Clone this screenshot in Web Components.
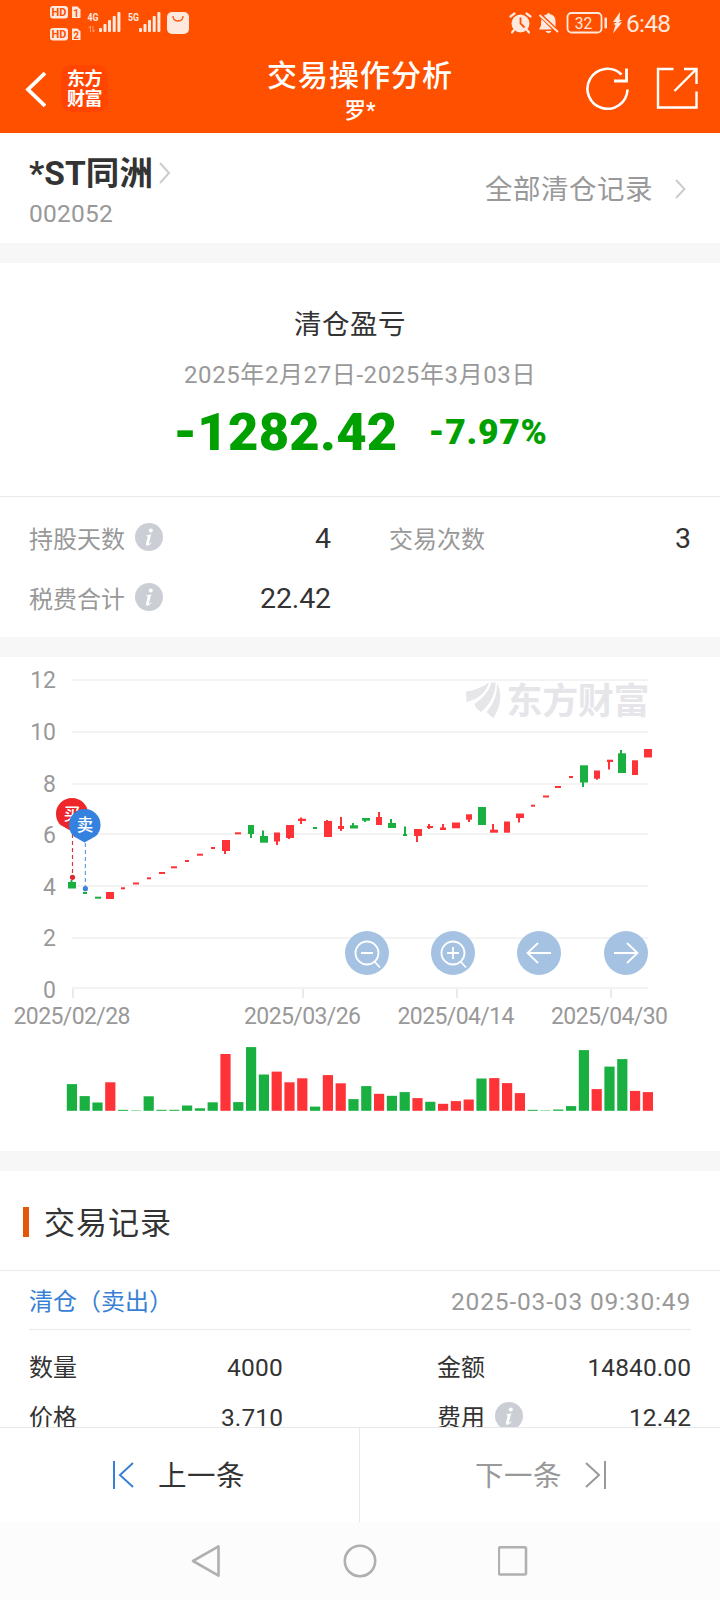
<!DOCTYPE html>
<html lang="zh-CN">
<head>
<meta charset="utf-8">
<title>交易操作分析</title>
<style>
html,body{margin:0;padding:0;background:#fff}
body{width:720px;height:1600px;overflow:hidden;font-family:Roboto,"Noto Sans CJK SC",sans-serif;color:#333}
</style>
</head>
<body>
<trade-app></trade-app>
<script>
const define=(name,html,setup)=>customElements.define(name,class extends HTMLElement{
  connectedCallback(){
    if(this.shadowRoot)return;
    const root=this.attachShadow({mode:'open'});
    const t=document.createElement('template');
    t.innerHTML=typeof html==='function'?html(this):html;
    root.append(t.content.cloneNode(true));
    if(setup)setup(this,root);
  }
});

/* One line of text; "w" spreads the letters over a given advance width. */
define('fit-text',`<style>:host{display:inline-block;line-height:1;white-space:nowrap;flex:none}</style><span><slot></slot></span>`,(el,root)=>{
  const w=+el.getAttribute('w');
  el.style.fontSize=el.getAttribute('size')+'px';
  if(w){
    const s=root.querySelector('span'),n=[...el.textContent].length;
    s.style.letterSpacing=((w-s.getBoundingClientRect().width)/n)+'px';
  }
});

define('info-dot',`<style>:host{display:block;width:28px;height:28px;flex:none}svg{display:block}</style>
<svg width="28" height="28"><circle cx="14" cy="14" r="14" fill="#cbcfd5"/><circle cx="15.8" cy="7.6" r="2" fill="#fff"/><path d="M11.2 12.4L16.3 11.3L13.9 20Q13.6 21.6 16.4 19.3L16.7 19.8Q14.2 23 12 22.8Q10.4 22.5 11 20.2L12.7 14.1Q12.9 13 11.1 13Z" fill="#fff"/></svg>`);

define('section-gap',`<style>:host{display:block;height:20px;background:#f7f7f7}</style>`);

define('status-bar',`<style>:host{display:flex;justify-content:space-between;height:44px;padding:0 48px;box-sizing:border-box}svg{display:block}</style>
<svg width="144" height="44" fill="#ffe9df">
 <rect x="2" y="6" width="18" height="12.5" rx="3"/><path d="M24 6.500h5.500l3 3v8.500h-8.500z"/>
 <rect x="2" y="28" width="18" height="12.500" rx="3"/><path d="M24 28.500h5.500l3 3v8.500h-8.500z"/>
 <g fill="#ff5000" font-weight="700" text-anchor="middle"><text x="11" y="16.200" font-size="11">HD</text><text x="28" y="16.500" font-size="10">1</text><text x="11" y="38.200" font-size="11">HD</text><text x="28" y="38.500" font-size="10">2</text></g>
 <g font-size="11.500" font-weight="700"><text x="39.500" y="20.500" textLength="11" lengthAdjust="spacingAndGlyphs">4G</text><text x="80" y="20.500" textLength="11" lengthAdjust="spacingAndGlyphs">5G</text></g>
 <path d="M42.500 32v-6l-2 2m4.500-2v6l2-2" fill="none" stroke="#ffe9df" opacity=".5"/>
 <g id="b"><rect x="51" y="28" width="3" height="4" rx="1"/><rect x="55.500" y="24" width="3" height="8" rx="1"/><rect x="60" y="20" width="3" height="12" rx="1"/><rect x="64.700" y="16" width="3" height="16" rx="1"/><rect x="69.400" y="12" width="3" height="20" rx="1"/></g>
 <use href="#b" x="40"/>
 <rect x="119" y="12" width="22" height="22" rx="5"/><path d="M125 16q0 5 5 5t5-5" fill="none" stroke="#ff5000" stroke-width="1.300"/>
</svg>
<svg width="164" height="44" viewBox="508 0 164 44" fill="#ffe9df">
 <circle cx="520.500" cy="23.500" r="9"/><path d="M510.500 16.500l4-3M530.500 16.500l-4-3M514 30l-2 2.500M527 30l2 2.500" stroke="#ffe9df" stroke-width="2.200" stroke-linecap="round"/><path d="M520.500 17.500v6l4 4" fill="none" stroke="#ff5000" stroke-width="1.800"/>
 <path d="M543 16.500q2-2 4-2.200q1.500-3 3 0q5.500 1 5.500 7.200v6.500zM541.500 19q-.5 2-.5 6.500l-2 4h13zM545.500 31h6q-3 4.500-6 0z"/><path d="M541 14l18 17" stroke="#ff5000" stroke-width="1.600"/><path d="M539.500 15l18.500 17" stroke="#ffe9df" stroke-width="1.800"/>
 <rect x="567.500" y="13" width="34" height="19.500" rx="4" fill="none" stroke="#ffe9df" stroke-width="1.800"/><rect x="604.500" y="17.500" width="2.500" height="11" rx="1"/>
 <text x="583.500" y="28.700" font-size="17" text-anchor="middle" textLength="17.500" lengthAdjust="spacingAndGlyphs">32</text>
 <path d="M620 12l-7 10h4l-3.500 2 2 1-2.500 8.500 9-11h-4l4-2-2.500-1z"/>
 <text x="626" y="32" font-size="24.500" textLength="45">6:48</text>
</svg>`);

define('title-bar',`<style>:host{display:grid;grid-template-columns:200px 1fr 200px;height:89px;color:#fff}
.l{display:flex;align-items:center;padding:0 0 0 25px;gap:15px}
svg{display:block}
.logo{width:47px;height:47px;border-radius:10px;background:#ff4500;display:flex;flex-direction:column;align-items:center;justify-content:center;gap:2px;font-weight:700}
.c{display:flex;flex-direction:column;align-items:center;padding-top:17px;font-weight:500;gap:9px}
.r{display:flex;justify-content:flex-end;align-items:center;gap:26px;padding:0 22px 2px 0}</style>
<div class="l"><svg width="21" height="38"><path d="M20 3L3 19.500L20 36" fill="none" stroke="#fff" stroke-width="3.800"/></svg><div class="logo"><fit-text size="18" w="35">东方</fit-text><fit-text size="18" w="35">财富</fit-text></div></div>
<div class="c"><fit-text size="30" w="186">交易操作分析</fit-text><fit-text size="21.500">罗*</fit-text></div>
<div class="r"><svg width="44" height="44"><path d="M42 23.500A20 20 0 1 1 36 8.500" transform="translate(-.5)" fill="none" stroke="#fff" stroke-width="2.600"/><path d="M40.500 2.500v12.500h-12.500" fill="none" stroke="#fff" stroke-width="2.800"/></svg>
<svg width="42" height="44" fill="none" stroke="#fff" stroke-width="2.400"><path d="M17.500 3H2v38.500h38.500V25.500M28 3h12.500v15M40 3.500L18.500 25"/></svg></div>`);

define('stock-row',`<style>:host{display:flex;justify-content:space-between;height:110px;box-sizing:border-box;padding:22px 33px 0 29px}
.n{display:flex;align-items:center;gap:6px;font-weight:700;height:34px;padding-top:2px}.code{color:#999;margin-top:11px}svg{display:block}
.a{display:flex;align-items:center;color:#999;height:70px;gap:20px}</style>
<div><div class="n"><fit-text size="33.500" w="124">*ST同洲</fit-text><svg width="12" height="26" style="margin-top:-5px"><path d="M1 4l9 10-9 10" fill="none" stroke="#ccc" stroke-width="2"/></svg></div><div class="code"><fit-text size="24.500" w="84">002052</fit-text></div></div>
<div class="a"><fit-text size="27.500" w="168">全部清仓记录</fit-text><svg width="14" height="24" style="margin-top:-2px"><path d="M3 3l8.500 9L3 21" fill="none" stroke="#ccc" stroke-width="2"/></svg></div>`);

define('profit-summary',`<style>:host{display:flex;flex-direction:column;align-items:center;height:234px;box-sizing:border-box;padding-top:48px;border-bottom:1px solid #eaeaea}
.k{margin-right:20px}.d{color:#999;margin-top:24.500px}.v{display:flex;align-items:center;color:#00a000;gap:31px;margin-top:19px;padding-left:1px}</style>
<fit-text class="k" size="27.500" w="112">清仓盈亏</fit-text><fit-text class="d" size="24" w="352">2025年2月27日-2025年3月03日</fit-text>
<div class="v"><fit-text size="52.500" w="224" style="font-weight:900">-1282.42</fit-text><fit-text size="35.500" w="119" style="font-weight:900">-7.97%</fit-text></div>`);

define('stat-item',el=>`<style>:host{display:flex;align-items:center;height:60px}.k{color:#999;margin-top:2px}info-dot{margin:-5px 0 0 10px}.v{margin-left:auto}</style><fit-text class="k" size="24" w="96">${el.getAttribute('k')}</fit-text>${el.hasAttribute('info')?'<info-dot></info-dot>':''}<fit-text class="v" size="28.500" w="${el.getAttribute('w')}">${el.getAttribute('v')}</fit-text>`);

define('stat-grid',`<style>:host{display:grid;grid-template-columns:302px 302px;column-gap:58px;grid-auto-rows:60px;height:140px;box-sizing:border-box;padding:12px 29px 0}</style>
<stat-item k="持股天数" info v="4" w="16"></stat-item><stat-item k="交易次数" v="3" w="16"></stat-item><stat-item k="税费合计" info v="22.42" w="71"></stat-item>`);

/* Daily candles: left, right, body top, body bottom, colour, wick x, wick top, wick bottom. */
const candles=[[68,76,882,888.5,'g',71.5,880,884],[83,87,892,894,'g'],[95,101,896.7,898.7,'g'],[106,114,892,899,'r'],[121,125,887.3,889.3,'r'],[133,139,882.5,884.5,'r'],[147,151,877.3,879.3,'r'],[159,165,872,874,'r'],[171,177,866.3,868.3,'r'],[185,189,860,862,'r'],[197,203,853.7,855.7,'r'],[211,215,847,849,'r'],[222,230,840,851,'r',225,845,854],[235,241,832.3,834.3,'r'],[248,254,825,834,'g',251,830,838],[260,268,836,842.7,'g',263,830.5,838],[274,280,832.5,841.5,'r',277,838,845],[286,294,825,838,'r',289,830,839],[298,306,818.7,821,'r',301,817.5,824],[313,317,827,829,'g'],[324,332,821,837,'r',327,820,822],[338,344,826,829,'r',341,817,831],[350,358,825.3,828.5,'g',353,823,826],[362,370,818,820.7,'g',365,818,822],[376,382,817,825,'r',379,812,820],[388,396,823,828,'g',391,819,825],[403,407,834,836,'g',405,826.5,835],[414,422,829,836,'r',417,832,842],[427,433,826,828,'r',429,824,829],[440,446,827.5,830,'r',443,824,829],[452,460,822.5,828.3,'r'],[466,472,814.3,819.7,'r',469,817,822],[478,486,807,825,'g'],[490,498,829.7,832.7,'r',493,824,830],[504,510,821.5,832.7,'r'],[516,524,813.5,818,'r',519,816,822.5],[531,535,804.7,806.7,'r'],[543,549,795.5,797.5,'r'],[555,561,786,788,'r'],[569,573,776,778,'r'],[580,588,765.3,782.5,'g',583,780,787],[594,600,770.5,778.7,'r',597,775,779.7],[607,613,759.7,762,'r',609,760,769.5],[618,626,753.3,773,'g',621,750,756],[632,638,760.3,775,'r'],[644,652,749,757.5,'r']];
/* Daily volume: colour followed by bar height. */
const volumes='g26.7 g14.7 g8.3 r28.5 g1 g.4 g14.5 g1 g1 g5.3 g2.5 g8.5 r56.8 g8.7 g63.7 g36.3 r39.200 r28.5 r32.5 g4.2 r35.7 r27.5 g11.7 g24.7 r17 g15 g18.7 r12.7 g9 r7 r9.700 r11.3 g32.3 r32.7 r27.7 r17.7 g1 g.4 g1.3 g4.700 g60.7 r21.7 g44.2 g51.7 r19.9 r18.7'.split(' ');
const paint={r:'#fe3338',g:'#19b041'};
const candleSvg=candles.map(([a,b,t,e,c,x,w,z])=>`<g fill="${paint[c]}"><rect x="${a}" y="${t}" width="${b-a}" height="${e-t}"/>${x?`<rect x="${x-1}" y="${w}" width="2" height="${z-w}"/>`:''}</g>`).join('');
const volumeSvg=volumes.map((v,i)=>`<rect x="${(66.8+i*12.8).toFixed(1)}" y="${1110.8-v.slice(1)}" width="10.200" height="${v.slice(1)}" fill="${paint[v[0]]}"/>`).join('');
const gridY=[680,732,784,834,886,938,988];
const labelY=[688.3,740,791.500,843.300,894.500,946,997.500];

define('price-chart',`<style>:host{display:block;height:494px}svg{display:block}</style>
<svg width="720" height="494" viewBox="0 657 720 494" font-size="23" fill="#999">
<g fill="#e6e6ea"><path d="M466 691.500Q478 690 489 682.500Q484 698 466.500 702Z"/><path d="M474.500 704Q488 695 491.500 682.500H495.500Q496 699 481 712Q475 708 474.500 704Z"/><path d="M497 682.500Q505 699 493.500 718Q490 716 486.500 712Q498 699 497 682.500Z"/><text x="506.500" y="713.500" font-size="36" font-weight="700" textLength="143">东方财富</text></g>
<g stroke="#f3f3f3" stroke-width="2">${gridY.map(y=>`<path d="M72 ${y}H648"/>`).join('')}</g>
<g stroke="#ebebeb" stroke-width="2"><path d="M73 989v9M303 989v9M457 989v9M611 989v9"/></g>
<g text-anchor="end">${gridY.map((y,i)=>`<text x="56" y="${labelY[i]}">${12-i*2}</text>`).join('')}</g>
<g><text x="13.500" y="1024" textLength="117">2025/02/28</text><text x="244" y="1024" textLength="117">2025/03/26</text><text x="397.500" y="1024" textLength="117">2025/04/14</text><text x="551" y="1024" textLength="117">2025/04/30</text></g>
${candleSvg}${volumeSvg}
<path d="M72.500 834v42" stroke="#d13b3e" stroke-dasharray="4 3" stroke-width="1.200"/><circle cx="72.500" cy="877.300" r="2.600" fill="#dc2b30"/>
<path d="M85.400 843v44" stroke="#64a0de" stroke-dasharray="4 3" stroke-width="1.200"/><circle cx="85.400" cy="888.700" r="2.600" fill="#3f82d6"/>
<path d="M72 831.500L60.500 825A16 16 0 1 1 83.500 825Z" fill="#ee2529"/><text x="72" y="819.500" font-size="16.500" font-weight="500" fill="#fff" text-anchor="middle">买</text>
<path d="M84.500 842.500L74 836.500A15.800 15.800 0 1 1 96 836Z" fill="#3581e0"/><text x="85" y="831" font-size="16.500" font-weight="500" fill="#fff" text-anchor="middle">卖</text>
<g fill="#a5c2e3"><circle cx="367" cy="953" r="22"/><circle cx="453" cy="953" r="22"/><circle cx="539" cy="953" r="22"/><circle cx="626" cy="953" r="22"/></g>
<g fill="none" stroke="#fff" stroke-width="1.800"><circle cx="367" cy="953" r="11.500"/><path d="M361 953h12M374.500 961.500l5.500 6"/><circle cx="453" cy="953" r="11.500"/><path d="M447 953h12M453 947v12M460.500 961.500l5.500 6M551 953h-23.500M538 943l-10.500 10 10.500 10M614 953h23.500M627 943l10.500 10-10.500 10"/></g>
</svg>`);

define('record-heading',`<style>:host{display:flex;align-items:center;height:99px;padding:0 23px;gap:15px;border-bottom:1px solid #eaeaea}i{width:6px;height:30px;background:#e25709;margin-top:2px}fit-text{margin-top:5px}</style><i></i><fit-text size="31" w="128">交易记录</fit-text>`);

define('record-field',el=>`<style>:host{display:flex;align-items:center;height:50px}info-dot{margin:-5px 0 0 10px}.v{margin-left:auto}</style><fit-text size="24" w="48">${el.getAttribute('k')}</fit-text>${el.hasAttribute('info')?'<info-dot></info-dot>':''}<fit-text class="v" size="24.500" w="${el.getAttribute('w')}">${el.getAttribute('v')}</fit-text>`);

define('record-card',`<style>:host{display:block;height:156px;overflow:hidden;padding:0 29px}
.h{display:flex;justify-content:space-between;align-items:center;height:59px;padding-top:4px;box-sizing:border-box;border-bottom:1px solid #eaeaea}.b{color:#3880d5}.t{color:#999}
.g{display:grid;grid-template-columns:254px 254px;column-gap:154px;padding-top:13px}</style>
<div class="h"><fit-text class="b" size="24" w="144">清仓（卖出）</fit-text><fit-text class="t" size="24.500" w="240">2025-03-03 09:30:49</fit-text></div>
<div class="g"><record-field k="数量" v="4000" w="56"></record-field><record-field k="金额" v="14840.00" w="103.500"></record-field><record-field k="价格" v="3.710" w="62"></record-field><record-field k="费用" info v="12.42" w="62"></record-field></div>`);

define('pager-bar',`<style>:host{display:grid;grid-template-columns:359px 361px;height:95px;background:#fff;border-top:1px solid #e8e8e8;box-sizing:border-box}
div{display:flex;align-items:center;justify-content:center;gap:23px;height:94px;box-sizing:border-box}.n{border-left:1px solid #e8e8e8;color:#999;padding-left:2px}svg{display:block;flex:none}fit-text{margin-top:4px}</style>
<div><svg width="22" height="30" style="margin-left:-2px;margin-right:1px" fill="none" stroke="#3880d5" stroke-width="2"><path d="M2 1v28M21 3L8 15l13 12"/></svg><fit-text size="28.500" w="87">上一条</fit-text></div>
<div class="n"><fit-text size="28.500" w="87">下一条</fit-text><svg width="22" height="30" fill="none" stroke="#999" stroke-width="2"><path d="M20 1v28M1 3l13 12L1 27"/></svg></div>`);

define('system-nav',`<style>:host{display:flex;align-items:center;justify-content:center;gap:121px;height:78px;background:#fcfcfc}svg{display:block}</style>
<svg width="32" height="34" fill="none" stroke="#b0b0b0" stroke-width="2.600" stroke-linejoin="round"><path d="M3 17L28.500 2.300v29.400z"/></svg><svg width="34" height="34" fill="none" stroke="#b0b0b0" stroke-width="2.600"><circle cx="17" cy="17" r="15.200"/></svg><svg width="32" height="34" fill="none" stroke="#b0b0b0" stroke-width="2.600"><rect x=".8" y="3.300" width="27.200" height="27.200" rx="1.500"/></svg>`);

define('app-header',`<style>:host{display:block;background:#ff5000;height:133px}</style><status-bar></status-bar><title-bar></title-bar>`);
define('trade-app',`<style>:host{display:block;width:720px;height:1600px}</style>
<app-header></app-header><stock-row></stock-row><section-gap></section-gap><profit-summary></profit-summary><stat-grid></stat-grid><section-gap></section-gap><price-chart></price-chart><section-gap></section-gap><record-heading></record-heading><record-card></record-card><pager-bar></pager-bar><system-nav></system-nav>`);
</script>
</body>
</html>
